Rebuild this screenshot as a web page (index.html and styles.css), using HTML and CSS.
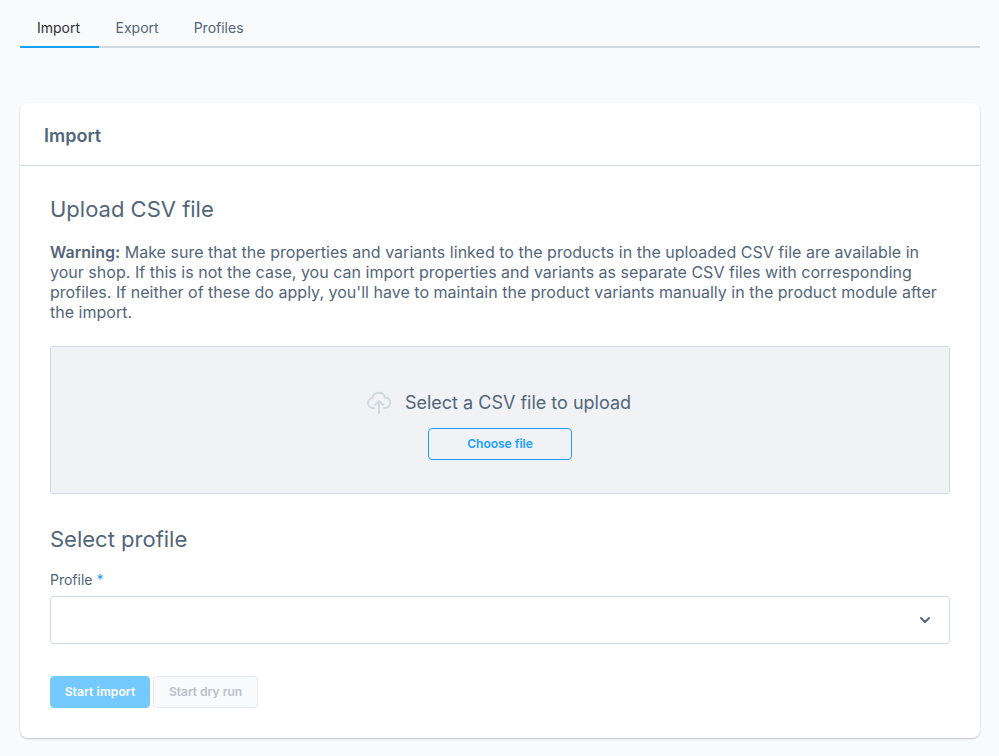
FILE: index.html
```html
<!DOCTYPE html>
<html lang="en">
<head>
<meta charset="utf-8">
<title>Import</title>
<link rel="stylesheet" href="styles.css">
</head>
<body>
<main class="page">
  <nav class="tabs">
    <a class="tab tab-active">Import</a>
    <a class="tab">Export</a>
    <a class="tab">Profiles</a>
  </nav>
  <section class="card">
    <header class="card-header"><h2 class="card-title">Import</h2></header>
    <div class="card-body">
      <h3 class="section-title">Upload CSV file</h3>
      <p class="warning"><strong>Warning:</strong> Make sure that the properties and variants linked to the products in the uploaded CSV file are available in your shop. If this is not the case, you can import properties and variants as separate CSV files with corresponding profiles. If neither of these do apply, you'll have to maintain the product variants manually in the product module after the import.</p>
      <div class="dropzone">
        <div class="drop-label">
          <svg class="cloud" width="24" height="24" viewBox="0 0 24 24" fill="none" stroke="#d1d9e0" stroke-width="2" stroke-linecap="round" stroke-linejoin="round"><path d="M7 18H6a5 5 0 0 1-.6-9.960A6.500 6.500 0 0 1 18 7.500a5 5 0 0 1 .5 10.500H17"/><path d="M12 23V11.500"/><path d="M8 15l4-4 4 4"/></svg>
          <span>Select a CSV file to upload</span>
        </div>
        <button class="btn-choose" type="button">Choose file</button>
      </div>
      <h3 class="section-title profile-title">Select profile</h3>
      <label class="field-label">Profile <span class="req">*</span></label>
      <div class="select">
        <svg width="12" height="8" viewBox="0 0 12 8" fill="none" stroke="#52667a" stroke-width="2" stroke-linecap="round" stroke-linejoin="round"><path d="M2 2l4 4 4-4"/></svg>
      </div>
      <div class="actions">
        <button class="btn btn-primary" type="button">Start import</button>
        <button class="btn btn-disabled" type="button">Start dry run</button>
      </div>
    </div>
  </section>
</main>
</body>
</html>
```
FILE: styles.css
```css
* { box-sizing: border-box; }
html, body { margin: 0; height: 100%; }
body {
  background: #f9fafb;
  font-family: Inter, "Liberation Sans", sans-serif;
  color: #52667a;
  overflow: hidden;
}
.page { padding: 8px 19px 0 20px; }
.tabs {
  display: flex;
  height: 40px;
  border-bottom: 2px solid #d1d9e0;
  margin-bottom: 55px;
}
.tab {
  height: 40px;
  padding: 0 18px 0 17px;
  font-size: 14px;
  line-height: 40px;
  color: #52667a;
  white-space: nowrap;
}
.tab-active {
  padding-right: 18.500px;
  color: #2b3136;
  border-bottom: 2px solid #189eff;
}
.card {
  background: #fff;
  border-radius: 8px;
  box-shadow: 0 1px 2px rgba(0, 0, 0, .22);
  height: 635px;
}
.card-header {
  height: 63px;
  padding: 3px 24px 0;
  border-bottom: 1px solid #d1d9e0;
  display: flex;
  align-items: center;
}
.card-title {
  margin: 0;
  font-size: 18px;
  font-weight: 600;
  color: #52667a;
}
.card-body { padding: 27px 30px 0; }
.section-title {
  margin: 0;
  font-size: 22px;
  line-height: 32px;
  font-weight: 400;
  color: #52667a;
}
.warning {
  margin: 17px 0 0;
  font-size: 16px;
  line-height: 20px;
  letter-spacing: .02px;
  color: #52667a;
}
.warning strong { font-weight: 600; }
.dropzone {
  margin-top: 24px;
  height: 148px;
  background: #f0f2f5;
  border: 1px solid #d1d9e0;
  border-radius: 3px;
  display: flex;
  flex-direction: column;
  align-items: center;
  padding-top: 44px;
}
.drop-label {
  display: flex;
  align-items: center;
  height: 24px;
  padding: 0 2px 2px 0;
  font-size: 18px;
  color: #52667a;
}
.cloud { margin-right: 14px; }
.btn-choose {
  margin-top: 13px;
  width: 144px;
  height: 32px;
  padding: 0 0 2px;
  border: 1px solid #189eff;
  border-radius: 4px;
  background: transparent;
  color: #189eff;
  font: 600 12px Inter, "Liberation Sans", sans-serif;
}
.profile-title { margin-top: 29px; }
.field-label {
  display: block;
  margin-top: 16px;
  font-size: 14px;
  line-height: 18px;
  color: #52667a;
}
.req { color: #189eff; }
.select {
  margin-top: 7px;
  height: 48px;
  background: #fff;
  border: 1px solid #d1d9e0;
  border-radius: 4px;
  display: flex;
  align-items: center;
  justify-content: flex-end;
  padding-right: 18px;
}
.actions { display: flex; gap: 3px; margin-top: 32px; }
.btn {
  height: 32px;
  padding: 0 0 2px;
  border-radius: 4px;
  font: 600 12px Inter, "Liberation Sans", sans-serif;
}
.btn-primary {
  width: 100px;
  border: 1px solid #74caff;
  background: #74caff;
  color: #fff;
  letter-spacing: .12px;
}
.btn-disabled {
  width: 105px;
  border: 1px solid #e4e8ec;
  background: #f9fafb;
  color: #b8c2cc;
}
```
